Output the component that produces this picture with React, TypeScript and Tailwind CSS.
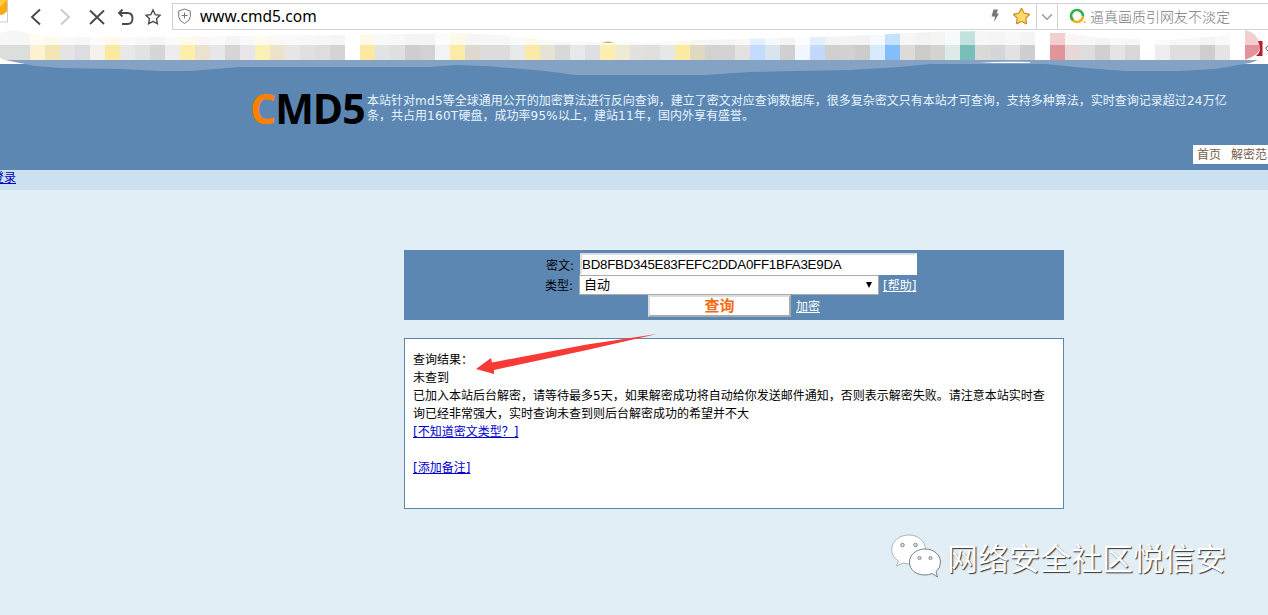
import { ChevronDown, Star } from "lucide-react";

const mosaic = (
  "dcdedb dcdedb fcf2d2 f3e6b4 e4e4e4 dcdde1 f5f2ea fce9a0 e8e8e8 e1e2e4 d6d6d6 ededf0 fdeeaa ece2d0 e6e7e9 " +
  "d5d5d5 e8e6ea fdf0b4 ede3cc e7e5e5 e1dfe0 dfdcdc d4d4d6 ffffff fce8a0 e2e3e3 dfdfdf cecdcf d2d1d3 f2f3f4 " +
  "fceba4 ddd9cf dcdcdc dcdcdc e8eaea fbe9aa e7e3d4 d7d9d9 e8e8e8 dde0e2 fcefb0 efead2 e2e1e0 dfdfdd e6e8e8 " +
  "fceaa2 e0d8bf d2d3d0 d3d3d3 e2e2e2 c4dcfc d9e4ed d0d0d0 f2f6fe c2d9fb d0d0d0 d4d0cf cccccc d8eafd 82bff8 " +
  "dedad8 cccbca d3d3d1 dcebe8 78bfba d9d9d7 d6d6d8 e2e2e4 cfcfcf ffffff e19499 e6d8d9 dddddd d0d0d2 e4e4e4 " +
  "d8d8d8 ffffff eeeef0 dedede dedede cecece e5e5e5 ffffff e39498"
).split(" ");

function TabStrip() {
  return (
    <svg className="absolute left-0 top-[30px] z-10" width="1268" height="46" viewBox="0 30 1268 46">
      <defs>
        <clipPath id="upper">
          <path d="M0 33L12 30L45 36L60 37H165L240 36L330 35L405 34L450 33L505 35L560 42H600L650 43L700 40L780 38L850 36L930 32L980 31L1035 32V33H1065L1100 38L1170 40L1220 36L1230 33H1245V30Q1257 32 1260 45H0Z" />
        </clipPath>
        <clipPath id="lower">
          <path d="M0 45H1260Q1262 54 1245 60H5Q0 59 0 57Z" />
        </clipPath>
      </defs>
      <path d="M602 43Q608 40 614 43Z" fill="#bfa45c" />
      <g clipPath="url(#upper)" opacity="0.46">
        {mosaic.map((c, i) => (
          <rect key={i} x={i * 15} y="30" width="15" height="15" fill={"#" + c} shapeRendering="crispEdges" opacity={/^(8|7|e1949|e3949|c4d|c2d)/.test(c) ? 1 : 0.5} />
        ))}
      </g>
      <g clipPath="url(#lower)">
        {mosaic.map((c, i) => (
          <rect key={i} x={i * 15} y="45" width="15" height="15" fill={"#" + c} shapeRendering="crispEdges" />
        ))}
      </g>
      <path d="M1258 41H1262.500V56H1256Q1263 51 1258 41Z" fill="#b91d2c" />
      <path d="M1268 46Q1264 48 1268 51" fill="none" stroke="#555" />
      <path d="M5 60H1258Q1252 63 1244 64L1215 69L1180 71H1125L1085 68L1045 64H970L930 64L900 67L850 70L795 71L750 72L705 75L645 75H575L545 71L510 68L485 66L455 65L430 67L330 67L240 67L190 71H160L120 69L60 68L35 66Z" fill="#84a2c3" />
      <path d="M0 58Q5 61 17 63V64H0Z" fill="#fff" />
      <path d="M980 63Q1000 61 1030 62V63Z" fill="#fff" />
    </svg>
  );
}

function BrowserBar() {
  return (
    <div className="relative flex h-16 items-start overflow-hidden bg-white">
      <svg width="8" height="24" viewBox="0 0 8 24" className="shrink-0">
        <path d="M0 0H7.500V22H0" fill="#fff" stroke="#ccc" />
        <path d="M0 0H7V11Q4 15 0 15Z" fill="#ffa911" />
        <path d="M0 0H7L0 7Z" fill="#ffcc3c" />
      </svg>
      <svg width="164" height="34" viewBox="8 0 164 34" fill="none" stroke="#4a4a4a" strokeWidth="1.900" className="shrink-0">
        <path d="M40 9.500L32 17L40 24.500" />
        <path d="M61 9.500L69 17L61 24.500" stroke="#cacaca" />
        <path d="M90 10.500L104 24M104 10.500L90 24" />
        <path d="M122.500 9.500L119 13L122.500 16.500M119.500 13H127.500Q132.500 13 132.500 18.500T127.500 24H122" />
        <path d="M153 10L155.200 14.700L160 15.300L156.500 18.700L157.400 23.800L153 21.400L148.600 23.800L149.500 18.700L146 15.300L150.800 14.700Z" strokeWidth="1.400" />
      </svg>
      <div className="mt-[3px] flex h-[27px] w-[1096px] shrink-0 items-center border border-r-0 border-[#d2d2d2]">
        <svg width="13" height="17" viewBox="0 0 13 17" className="ml-[5px]" fill="none" stroke="#777">
          <path d="M6.500 1L12.300 3V8.500Q12 13 6.500 15.500Q1 13 .700 8.500V3ZM3.500 7.500H9.500M6.500 4.500V10.500" />
        </svg>
        <span className="mb-0.5 ml-[9px] w-[788px] whitespace-nowrap font-['Noto_Sans'] text-[15.500px] leading-5 tracking-[0.080px] text-black">www.cmd5.com</span>
        <svg width="11" height="14" viewBox="0 0 11 14" className="mb-px ml-0.5">
          <path d="M3.500 0.500H8L6.500 4.500H9L4 13L5 7.500H1.500Z" fill="#777" />
        </svg>
        <Star className="ml-[11px] size-[19px] shrink-0" fill="#ffd866" stroke="#c98b2b" strokeWidth={1.500} />
        <div className="ml-[5px] flex h-[25px] w-[22px] shrink-0 items-center justify-center border-x border-[#d2d2d2]">
          <ChevronDown className="size-[18px] shrink-0 text-[#999]" strokeWidth={2} />
        </div>
        <svg width="18" height="18" viewBox="0 0 18 18" className="ml-[11px] shrink-0" fill="none" strokeWidth="2.600">
          <path d="M2 8A6 6 0 1 1 14 8" stroke="#2eb34a" />
          <path d="M2 8A6 6 0 0 0 14 8" stroke="#eab51c" />
          <path d="M2 8A6 6 0 0 0 4 12" stroke="#2eb34a" />
          <circle cx="15.500" cy="14" r="1" fill="#eab51c" />
        </svg>
        <span className="mb-px ml-[3px] whitespace-nowrap font-['Noto_Sans_CJK_SC',sans-serif] text-[14px] font-light leading-5 text-[#777]">逼真画质引网友不淡定</span>
      </div>
    </div>
  );
}

function Arrow() {
  return (
    <svg className="absolute left-[71px] top-[-7px]" width="184" height="44" viewBox="0 0 184 44">
      <path d="M0 37L15 26L16 30.500L111 12.500L181 2L111 18L18 38V42Z" fill="#f83a36" />
    </svg>
  );
}

function Watermark() {
  return (
    <div className="absolute left-[891px] top-[534px] flex items-center">
      <svg width="51" height="45" viewBox="0 0 51 45" fill="#ffffff" stroke="#a4adb2" strokeWidth="0.900">
        <path d="M18 1C8 1 .700 7.500 .700 15.500C.700 20.500 3.500 24.500 7.500 27L5.500 32L12 29Q17 30.500 21 29.500Q32 27 34.500 15C34 7 27 1 18 1Z" />
        <path d="M34 15C25 15 18.500 21 18.500 28C18.500 36 25 41 34 41Q38 41 41 39.500L46.500 43L45 38Q49.500 34 49.500 28C49.500 21 43 15 34 15Z" stroke="#6b747a" />
        <g fill="#d5dde0" stroke="#7b858a">
          <circle cx="11.500" cy="11" r="1.800" />
          <circle cx="24.500" cy="11" r="1.800" />
          <circle cx="28.500" cy="24" r="1.600" />
          <circle cx="39.500" cy="24" r="1.600" />
        </g>
      </svg>
      <span className="ml-[5px] whitespace-nowrap font-['Noto_Sans_CJK_SC',sans-serif] text-[31px] leading-[45px] text-white [text-shadow:1px_1px_1px_#333]">网络安全社区悦信安</span>
    </div>
  );
}

export default function App() {
  return (
    <div className="relative h-[615px] w-[1268px] overflow-hidden bg-[#e1eef6] font-['DejaVu_Sans','Noto_Sans_CJK_SC',sans-serif] text-[12px] text-black [text-decoration-skip-ink:none]">
      <BrowserBar />
      <TabStrip />
      <header className="flex h-[106px] bg-[#5c87b2] pl-[250px]">
        <h1 className="mt-[17px] w-[117px] shrink-0 whitespace-nowrap font-['Open_Sans'] text-[41px] font-bold leading-[54px] tracking-[-1px]">
          <span className="text-[#ff8000]">C</span>MD5
        </h1>
        <div className="flex flex-1 flex-col">
          <p className="mt-[30px] whitespace-nowrap text-[12px] leading-[15px] text-[#e8f4ff]">
            本站针对<span className="tracking-[0.300px]">md5</span>等全球通用公开的加密算法进行反向查询，建立了密文对应查询数据库，很多复杂密文只有本站才可查询，支持多种算法，实时查询记录超过<span className="tracking-[0.300px]">24</span>万亿
            <br />
            条，共占用<span className="tracking-[0.300px]">160T</span>硬盘，成功率<span className="tracking-[0.300px]">95%</span>以上，建站<span className="tracking-[0.300px]">11</span>年，国内外享有盛誉。
          </p>
          <nav className="ml-auto mt-[21px] flex h-[19px] w-[75px] gap-2.5 overflow-hidden whitespace-nowrap bg-white pl-1 leading-[21px] text-[#75604d]">
            <span>首页</span>
            <span>解密范</span>
          </nav>
        </div>
      </header>
      <div className="flex h-5 bg-[#cbe1ef] leading-4">
        <a className="-ml-2 text-[#0000b8] underline">登录</a>
      </div>
      <main className="ml-[404px] w-[660px] pt-[60px]">
        <form className="h-[70px] bg-[#5c87b2] pt-[3px]">
          <div className="flex h-[22px] pl-[142px]">
            <label className="w-[34px] whitespace-nowrap leading-[26px]">密文:</label>
            <div className="h-[22px] w-[337px] border-2 border-[#ddd] border-r-white border-b-white bg-white font-['Liberation_Sans'] text-[13.333px] leading-[19px] tracking-[-0.250px]">BD8FBD345E83FEFC2DDA0FF1BFA3E9DA</div>
          </div>
          <div className="flex h-5 pl-[141px]">
            <label className="w-[34px] whitespace-nowrap leading-[23px]">类型:</label>
            <div className="flex h-5 w-[300px] items-center justify-between border border-[#aaa] bg-white pl-1 pr-[5px]">
              <span className="text-[13px] leading-[18px]">自动</span>
              <svg width="8" height="8" viewBox="0 0 8 8"><path d="M1 1H7L4 7Z" /></svg>
            </div>
            <a className="ml-1 whitespace-nowrap leading-[22px] text-white underline">[帮助]</a>
          </div>
          <div className="flex h-[22px] pl-[244px]">
            <button type="button" className="h-[22px] w-[143px] border-2 border-[#ddd] border-r-[#aaa] border-b-[#aaa] bg-white text-[15px] font-bold leading-[18px] text-[#f36b12]">查询</button>
            <a className="ml-[5px] leading-6 text-white underline">加密</a>
          </div>
        </form>
        <section className="relative mt-[18px] h-[171px] border border-[#5c87a9] bg-white pl-2 pt-3 leading-[18px]">
          <p>查询结果：</p>
          <p>未查到</p>
          <p className="whitespace-nowrap">已加入本站后台解密，请等待最多5天，如果解密成功将自动给你发送邮件通知，否则表示解密失败。请注意本站实时查<br />询已经非常强大，实时查询未查到则后台解密成功的希望并不大</p>
          <p><a className="text-[#0000d0] underline">[不知道密文类型？]</a></p>
          <p className="mt-[18px]"><a className="text-[#0000d0] underline">[添加备注]</a></p>
          <Arrow />
        </section>
      </main>
      <Watermark />
    </div>
  );
}
